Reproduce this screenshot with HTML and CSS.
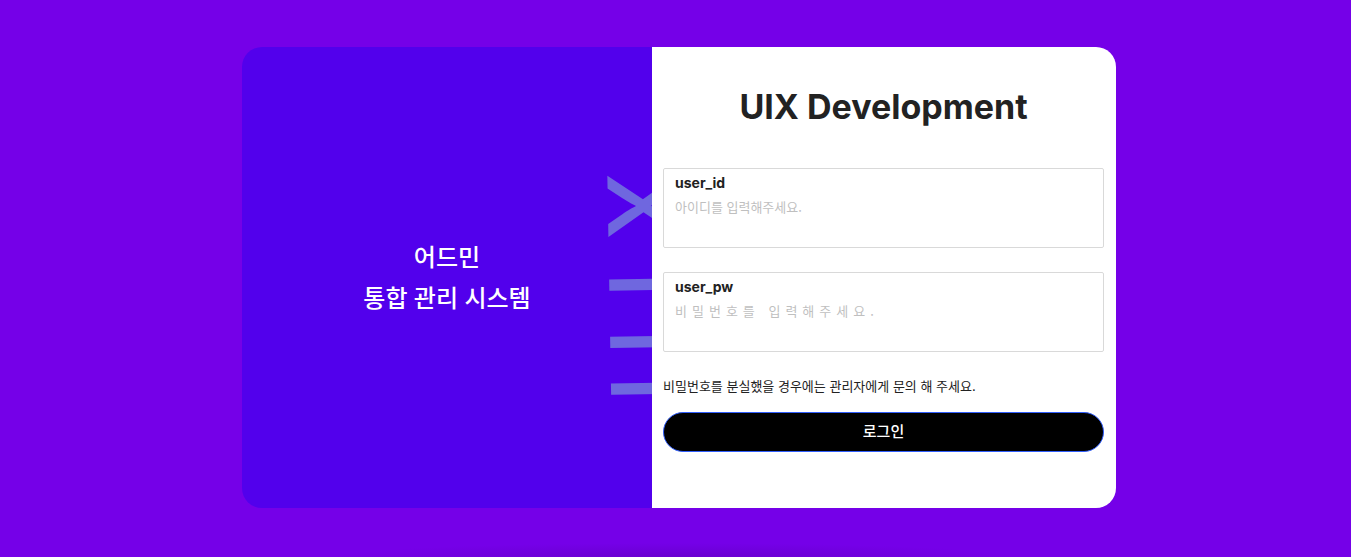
FILE: index.html
```html
<!DOCTYPE html>
<html lang="ko">
<head>
<meta charset="utf-8">
<meta name="viewport" content="width=device-width, initial-scale=1">
<title>UIX Development</title>
<link rel="stylesheet" href="styles.css">
</head>
<body>
<main class="page">
  <div class="card">
    <section class="intro">
      <p class="intro-title">어드민<br>통합 관리 시스템</p>
      <span class="intro-mark" aria-hidden="true">UIX</span>
    </section>
    <form class="login">
      <h1 class="login-title">UIX Development</h1>
      <div class="field">
        <label class="field-label" for="user-id">user_id</label>
        <input class="field-input" id="user-id" type="text" placeholder="아이디를 입력해주세요.">
      </div>
      <div class="field">
        <label class="field-label" for="user-pw">user_pw</label>
        <input class="field-input field-input-password" id="user-pw" type="password" placeholder="비밀번호를 입력해주세요.">
      </div>
      <p class="login-help">비밀번호를 분실했을 경우에는 관리자에게 문의 해 주세요.</p>
      <button class="login-button" type="button">로그인</button>
    </form>
  </div>
</main>
</body>
</html>
```
FILE: styles.css
```css
* {
  box-sizing: border-box;
}

body {
  margin: 0;
  background: #7500e8;
  color: #222;
  font-family: Inter, "Noto Sans CJK KR", sans-serif;
}

.page {
  display: flex;
  justify-content: center;
  align-items: center;
  min-height: 100vh;
  padding: 46px 0 48px 7px;
  background: radial-gradient(ellipse 340px 14px at 50% 100%, #6900d0, transparent) no-repeat;
}

.card {
  display: grid;
  grid-template-columns: 410fr 464fr;
  width: 100%;
  max-width: 874px;
  overflow: hidden;
  border-radius: 20px;
}

.intro {
  position: relative;
  display: flex;
  justify-content: center;
  align-items: center;
  overflow: hidden;
  background: #5200ec;
  color: #fff;
}

.intro-title {
  margin: 0;
  font-size: 24px;
  font-weight: 500;
  line-height: 41px;
  text-align: center;
}

.intro-mark {
  position: absolute;
  left: 100%;
  bottom: 107px;
  margin-left: 56px;
  color: #6f67df;
  font-size: 100px;
  font-weight: 500;
  line-height: 120px;
  letter-spacing: 30px;
  transform: rotate(-91deg);
  transform-origin: 0 100%;
}

.login {
  display: flex;
  flex-direction: column;
  padding: 32px 12px 56px 11px;
  background: #fff;
}

.login-title {
  margin: 0 0 33px;
  font-size: 34px;
  font-weight: 700;
  line-height: 56px;
  text-align: center;
}

.field {
  height: 80px;
  margin-bottom: 24px;
  padding: 4px 11px;
  border: 1px solid #d9d9d9;
  border-radius: 2px;
}

.field-label {
  display: block;
  font-size: 14px;
  font-weight: 700;
  line-height: 20px;
}

.field-input {
  display: block;
  width: 100%;
  height: 26px;
  padding: 0;
  border: 0;
  outline: 0;
  background: transparent;
  font: 13px "Noto Sans CJK KR", sans-serif;
}

.field-input::placeholder {
  color: #bfbfbf;
}

.field-input-password {
  letter-spacing: 5px;
}

.login-help {
  margin: 0 0 15px;
  font-size: 13px;
  line-height: 21px;
}

.login-button {
  height: 40px;
  padding: 0 0 4px;
  border: 1px solid #315efb;
  border-radius: 20px;
  background: #000;
  color: #fff;
  font: 500 15px "Noto Sans CJK KR", sans-serif;
}
```
